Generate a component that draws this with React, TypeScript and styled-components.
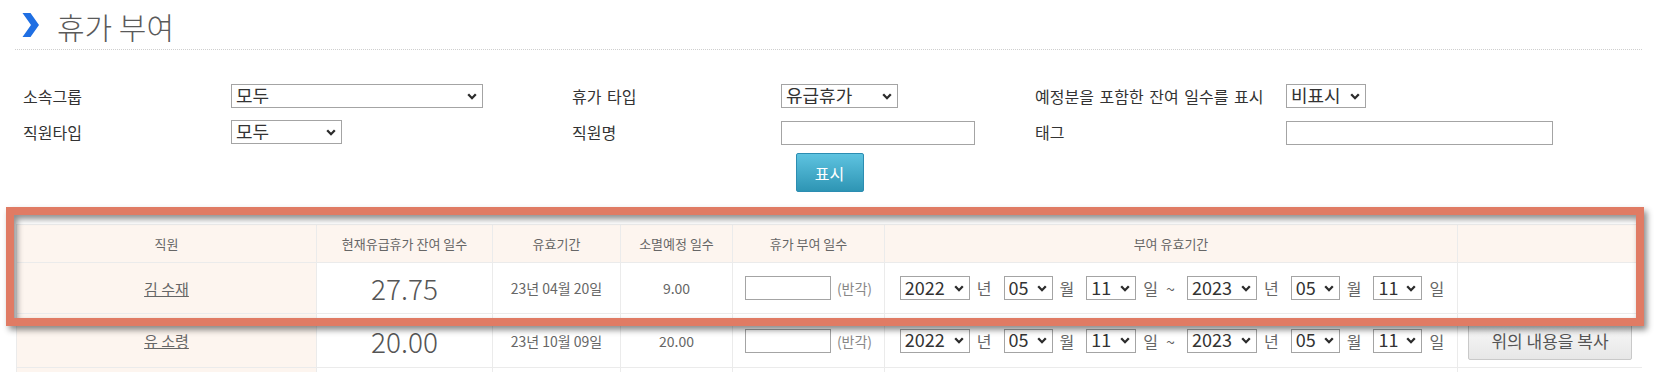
import React from "react";
import styled, { createGlobalStyle } from "styled-components";

const GlobalStyle = createGlobalStyle`
  html, body { margin: 0; padding: 0; background: #fff; }
  body {
    font-family: "Noto Sans CJK KR", "Noto Sans", sans-serif;
    color: #555;
  }
  * { box-sizing: border-box; }
`;

const Page = styled.div`
  width: 1659px;
  height: 389px;
  overflow: hidden;
`;

const TitleBar = styled.div`
  display: flex;
  align-items: center;
  gap: 18px;
  height: 50px;
  margin: 0 17px 0 15px;
  padding-left: 7px;
  border-bottom: 1px dotted #cfcfcf;
`;

const TitleText = styled.h1`
  margin: 0;
  font-size: 30px;
  font-weight: 300;
  line-height: 1;
  color: #5a5a5a;
  padding-top: 3px;
`;

const FilterGrid = styled.div`
  display: grid;
  grid-template-columns: 208px 341px 209px 254px 251px auto;
  grid-auto-rows: 24px;
  row-gap: 12px;
  align-items: center;
  padding-left: 23px;
  margin-top: 34px;
`;

const Label = styled.span`
  font-size: 16px;
  word-spacing: 2px;
  color: #333;
  white-space: nowrap;
`;

const SelectWrap = styled.span<{ $w: number }>`
  display: inline-grid;
  align-items: center;
  width: ${(p) => p.$w}px;
  height: 24px;
  & > * { grid-area: 1 / 1; }
`;

const NativeSelect = styled.select<{ $size: number }>`
  appearance: none;
  -webkit-appearance: none;
  width: 100%;
  height: 24px;
  border: 1px solid #a4a4a4;
  border-radius: 0;
  background: #fff;
  font-family: "Noto Sans CJK KR", "Noto Sans", sans-serif;
  font-size: ${(p) => p.$size}px;
  line-height: 18px;
  color: #333;
  padding: 0 0 3px 4px;
  outline: none;
`;

const ChevronIcon = styled.svg`
  justify-self: end;
  margin-right: 6px;
  width: 10px;
  height: 7px;
  pointer-events: none;
`;

const TextInput = styled.input<{ $w: number }>`
  width: ${(p) => p.$w}px;
  height: 24px;
  border: 1px solid #a4a4a4;
  border-radius: 0;
  padding: 0 4px;
  font-size: 14px;
  background: #fff;
  outline: none;
`;

const ActionRow = styled.div`
  display: flex;
  justify-content: center;
  margin-top: 9px;
`;

const PrimaryButton = styled.button`
  width: 68px;
  height: 39px;
  border: 1px solid #2c8db2;
  border-radius: 2px;
  background: linear-gradient(#5ec3e0, #2e95b4);
  color: #fff;
  font-family: "Noto Sans CJK KR", "Noto Sans", sans-serif;
  font-size: 16px;
  padding: 0;
`;

const TableSection = styled.section`
  position: relative;
  margin: 32px 17px 0 16px;
`;

const TableClip = styled.div`
  height: 148px;
  overflow: hidden;
`;

const Table = styled.table`
  width: 100%;
  border-collapse: collapse;
  table-layout: fixed;
`;

const Row = styled.tr<{ $h: number }>`
  height: ${(p) => p.$h}px;
`;

const Th = styled.th`
  background: #fdf5ef;
  border: 1px solid #ebebeb;
  font-weight: 400;
  font-size: 13px;
  color: #666;
  padding: 0;
`;

const Td = styled.td<{ $peach?: boolean }>`
  background: ${(p) => (p.$peach ? "#fdf5ef" : "#fff")};
  border: 1px solid #ebebeb;
  text-align: center;
  color: #666;
  font-size: 14px;
  padding: 0;
`;

const NameLink = styled.a`
  color: #666;
  text-decoration: underline;
  font-size: 15px;
`;

const BigNumber = styled.span`
  font-size: 28px;
  font-weight: 300;
  color: #555;
`;

const InlineCenter = styled.div<{ $shift?: number }>`
  display: flex;
  align-items: center;
  justify-content: center;
  padding-left: ${(p) => p.$shift ?? 0}px;
`;

const HalfNote = styled.span`
  margin-left: 6px;
  font-size: 14px;
  color: #888;
`;

const Unit = styled.span`
  display: inline-flex;
  gap: 8px;
  font-size: 16px;
  color: #666;
  margin: 0 12px 0 7px;
  white-space: nowrap;
`;

const CopyButton = styled.button`
  width: 164px;
  height: 38px;
  border: 1px solid #c9c9c9;
  border-radius: 2px;
  background: linear-gradient(#f8f8f8, #e7e7e7);
  color: #555;
  font-family: "Noto Sans CJK KR", "Noto Sans", sans-serif;
  font-size: 17px;
  padding: 0;
`;

const Highlight = styled.div`
  position: absolute;
  left: -10px;
  top: -17px;
  width: 1638px;
  height: 119px;
  border: 8px solid #e07b64;
  box-shadow: 3px 4px 6px rgba(0, 0, 0, 0.45),
    inset 3px 4px 6px rgba(0, 0, 0, 0.45);
  pointer-events: none;
`;

const Chevron = () => (
  <ChevronIcon viewBox="0 0 10 7">
    <path d="M1.2 1.3 L5 5.2 L8.8 1.3" fill="none" stroke="#2b2b2b" strokeWidth="2.3" />
  </ChevronIcon>
);

const Select = ({ w, value, size = 18 }: { w: number; value: string; size?: number }) => (
  <SelectWrap $w={w}>
    <NativeSelect $size={size} defaultValue={value}>
      <option value={value}>{value}</option>
    </NativeSelect>
    <Chevron />
  </SelectWrap>
);

const TitleChevron = () => (
  <svg width="17" height="24" viewBox="0 0 17 24">
    <polygon points="0.5,0 8.5,0 17,12 8.5,24 0.5,24 9,12" fill="#1f6fe3" />
  </svg>
);

const DateRange = () => (
  <InlineCenter $shift={14}>
    <Select w={70} value="2022" />
    <Unit>년</Unit>
    <Select w={49} value="05" />
    <Unit>월</Unit>
    <Select w={50} value="11" />
    <Unit>
      <span>일</span>
      <span>~</span>
    </Unit>
    <Select w={70} value="2023" />
    <Unit>년</Unit>
    <Select w={49} value="05" />
    <Unit>월</Unit>
    <Select w={49} value="11" />
    <Unit>일</Unit>
  </InlineCenter>
);

const rows = [
  { name: "김 수재", remain: "27.75", until: "23년 04월 20일", expire: "9.00", copy: false },
  { name: "유 소령", remain: "20.00", until: "23년 10월 09일", expire: "20.00", copy: true },
];

export default function App() {
  return (
    <Page>
      <GlobalStyle />
      <TitleBar>
        <TitleChevron />
        <TitleText>휴가 부여</TitleText>
      </TitleBar>

      <FilterGrid>
        <Label>소속그룹</Label>
        <div><Select w={252} value="모두" /></div>
        <Label>휴가 타입</Label>
        <div><Select w={117} value="유급휴가" /></div>
        <Label>예정분을 포함한 잔여 일수를 표시</Label>
        <div><Select w={80} value="비표시" /></div>

        <Label>직원타입</Label>
        <div><Select w={111} value="모두" /></div>
        <Label>직원명</Label>
        <div><TextInput $w={194} /></div>
        <Label>태그</Label>
        <div><TextInput $w={267} /></div>
      </FilterGrid>

      <ActionRow>
        <PrimaryButton>표시</PrimaryButton>
      </ActionRow>

      <TableSection>
        <TableClip>
          <Table>
            <colgroup>
              <col style={{ width: 300 }} />
              <col style={{ width: 176 }} />
              <col style={{ width: 128 }} />
              <col style={{ width: 112 }} />
              <col style={{ width: 152 }} />
              <col style={{ width: 573 }} />
              <col style={{ width: 185 }} />
            </colgroup>
            <thead>
              <Row $h={38}>
                <Th>직원</Th>
                <Th>현재유급휴가 잔여 일수</Th>
                <Th>유효기간</Th>
                <Th>소멸예정 일수</Th>
                <Th>휴가 부여 일수</Th>
                <Th>부여 유효기간</Th>
                <Th />
              </Row>
            </thead>
            <tbody>
              {rows.map((r, i) => (
                <Row key={r.name} $h={i === 0 ? 51 : 54}>
                  <Td $peach>
                    <NameLink href="#">{r.name}</NameLink>
                  </Td>
                  <Td>
                    <BigNumber>{r.remain}</BigNumber>
                  </Td>
                  <Td>{r.until}</Td>
                  <Td>{r.expire}</Td>
                  <Td>
                    <InlineCenter>
                      <TextInput $w={86} />
                      <HalfNote>(반각)</HalfNote>
                    </InlineCenter>
                  </Td>
                  <Td>
                    <DateRange />
                  </Td>
                  <Td>{r.copy && <CopyButton>위의 내용을 복사</CopyButton>}</Td>
                </Row>
              ))}
              <Row $h={40}>
                <Td $peach />
                <Td />
                <Td />
                <Td />
                <Td />
                <Td />
                <Td />
              </Row>
            </tbody>
          </Table>
        </TableClip>
        <Highlight />
      </TableSection>
    </Page>
  );
}
